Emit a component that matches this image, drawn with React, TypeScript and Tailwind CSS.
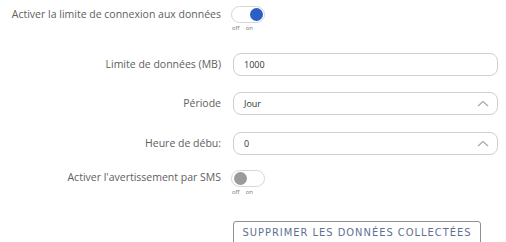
import React, { useState } from 'react';

interface ToggleProps {
  on: boolean;
  onChange: () => void;
}

function Toggle({ on, onChange }: ToggleProps) {
  return (
    <div className="flex flex-col items-start">
      <button
        onClick={onChange}
        className="relative w-[34px] h-[17px] rounded-full border border-[#d6d6d6] bg-white"
      >
        <span
          className={`absolute top-[1px] w-[13px] h-[13px] rounded-full ${
            on ? 'left-[18px] bg-[#2a5fc4]' : 'left-[2px] bg-[#9b9b9b]'
          }`}
        />
      </button>
      <div className="flex gap-[6px] pl-[1px] mt-[2px] text-[6px] leading-none text-[#777]">
        <span>off</span>
        <span>on</span>
      </div>
    </div>
  );
}

function Chevron() {
  return (
    <svg width="12" height="7" viewBox="0 0 12 7" className="mr-[8px]">
      <path d="M1 6 L6 1.5 L11 6" fill="none" stroke="#a8a8a8" strokeWidth="1.3" />
    </svg>
  );
}

export default function App() {
  const [limitOn, setLimitOn] = useState(true);
  const [smsOn, setSmsOn] = useState(false);

  const label = 'w-[231px] shrink-0 text-right pr-[10px] text-[10.5px] text-[#606060]';
  const field =
    'flex items-center justify-between w-[265px] h-[23px] ml-[2px] rounded-[8px] border border-[#cfcfcf] bg-white pl-[10px] text-[9px] text-[#333]';

  return (
    <div
      className="w-[506px] h-[242px] bg-white overflow-hidden"
      style={{ fontFamily: '"Open Sans", "Liberation Sans", sans-serif' }}
    >
      <div className="flex items-start pt-[6px]">
        <div className={`${label} pt-[1px]`}>Activer la limite de connexion aux données</div>
        <Toggle on={limitOn} onChange={() => setLimitOn(!limitOn)} />
      </div>

      <div className="flex items-center mt-[22px]">
        <div className={label}>Limite de données (MB)</div>
        <div className={field}>1000</div>
      </div>

      <div className="flex items-center mt-[16px]">
        <div className={label}>Période</div>
        <div className={field}>
          <span>Jour</span>
          <Chevron />
        </div>
      </div>

      <div className="flex items-center mt-[17px]">
        <div className={label}>Heure de débu:</div>
        <div className={field}>
          <span>0</span>
          <Chevron />
        </div>
      </div>

      <div className="flex items-start mt-[15px]">
        <div className={label}>Activer l'avertissement par SMS</div>
        <Toggle on={smsOn} onChange={() => setSmsOn(!smsOn)} />
      </div>

      <div className="flex mt-[26px] pl-[233px]">
        <button
          className="w-[248px] h-[24px] rounded-[3px] border border-[#8e8e96] text-[11px] font-medium tracking-[1px] text-[#5f6f94]"
          style={{ fontFamily: '"DejaVu Sans Condensed", "DejaVu Sans", sans-serif' }}
        >
          SUPPRIMER LES DONNÉES COLLECTÉES
        </button>
      </div>
    </div>
  );
}
